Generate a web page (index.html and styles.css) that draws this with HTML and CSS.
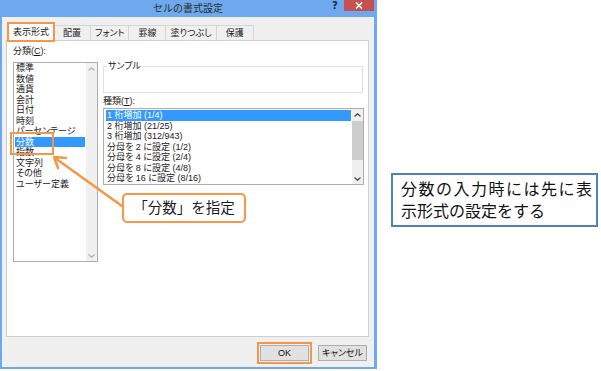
FILE: index.html
```html
<!DOCTYPE html>
<html lang="ja">
<head>
<meta charset="utf-8">
<link rel="stylesheet" href="styles.css">
</head>
<body>
<div class="stage">
  <div class="dialog">
    <div class="titlebar">
      <span class="title">セルの書式設定</span>
      <span class="help">?</span>
      <span class="close"><svg width="8" height="7" viewBox="0 0 8 7"><path d="M1 0.5 L7 6.5 M7 0.5 L1 6.5" stroke="#fff" stroke-width="1.6" fill="none"/></svg></span>
    </div>
    <div class="client">
      <div class="tabs">
        <div class="tab active">表示形式</div>
        <div class="tab">配置</div>
        <div class="tab">フォント</div>
        <div class="tab">罫線</div>
        <div class="tab">塗りつぶし</div>
        <div class="tab">保護</div>
      </div>
      <div class="panel">
        <div class="col">
          <div class="label">分類(<u>C</u>):</div>
          <div class="listbox cat">
            <ul class="items">
              <li class="item">標準</li>
              <li class="item">数値</li>
              <li class="item">通貨</li>
              <li class="item">会計</li>
              <li class="item">日付</li>
              <li class="item">時刻</li>
              <li class="item">パーセンテージ</li>
              <li class="item selected marked">分数</li>
              <li class="item">指数</li>
              <li class="item">文字列</li>
              <li class="item">その他</li>
              <li class="item">ユーザー定義</li>
            </ul>
            <div class="vscroll disabled">
              <span class="arrow-box"><svg width="7" height="4" viewBox="0 0 7 4"><path d="M0.5 3.5 L3.5 0.7 L6.5 3.5" stroke="#b4b4b4" stroke-width="1.2" fill="none"/></svg></span>
              <span class="arrow-box"><svg width="7" height="4" viewBox="0 0 7 4"><path d="M0.5 0.5 L3.5 3.3 L6.5 0.5" stroke="#b4b4b4" stroke-width="1.2" fill="none"/></svg></span>
            </div>
          </div>
        </div>
        <div class="col">
          <fieldset class="sample">
            <legend>サンプル</legend>
            <div class="sample-body"></div>
          </fieldset>
          <div class="label tight">種類(<u>T</u>):</div>
          <div class="listbox types">
            <ul class="items">
              <li class="item selected">1 桁増加 (1/4)</li>
              <li class="item">2 桁増加 (21/25)</li>
              <li class="item">3 桁増加 (312/943)</li>
              <li class="item">分母を 2 に設定 (1/2)</li>
              <li class="item">分母を 4 に設定 (2/4)</li>
              <li class="item">分母を 8 に設定 (4/8)</li>
              <li class="item">分母を 16 に設定 (8/16)</li>
            </ul>
            <div class="vscroll">
              <span class="arrow-box"><svg width="7" height="4" viewBox="0 0 7 4"><path d="M0.5 3.5 L3.5 0.7 L6.5 3.5" stroke="#505050" stroke-width="1.3" fill="none"/></svg></span>
              <span class="thumb"></span>
              <span class="track"></span>
              <span class="arrow-box"><svg width="7" height="4" viewBox="0 0 7 4"><path d="M0.5 0.5 L3.5 3.3 L6.5 0.5" stroke="#505050" stroke-width="1.3" fill="none"/></svg></span>
            </div>
          </div>
        </div>
      </div>
      <div class="buttons">
        <button class="btn ok">OK</button>
        <button class="btn">キャンセル</button>
      </div>
    </div>
  </div>
  <div class="note">分数の入力時には先に表示形式の設定をする</div>
  <div class="callout">「分数」を指定</div>
  <svg class="pointer" width="601" height="371" viewBox="0 0 601 371">
    <path d="M122 206 L55 158" stroke="#f79646" stroke-width="2.5" fill="none" stroke-linecap="round"/>
    <path d="M66 158 L54 157 L58 168" stroke="#f79646" stroke-width="2.5" fill="none" stroke-linecap="round" stroke-linejoin="round"/>
  </svg>
</div>
</body>
</html>
```

FILE: styles.css
```css
* { box-sizing: border-box; }
html, body { margin: 0; padding: 0; background: #fff; }
body {
  width: 601px;
  height: 371px;
  overflow: hidden;
  font-family: "Liberation Sans", "Noto Sans CJK JP", sans-serif;
  color: #1a1a1a;
}
.stage {
  position: relative;
  display: flex;
  align-items: flex-start;
  width: 601px;
  height: 371px;
}

/* dialog frame */
.dialog {
  display: flex;
  flex-direction: column;
  width: 377px;
  height: 369px;
  background: #6ea9ef;
  padding: 0 3px 2px 2px;
  flex-shrink: 0;
}
.titlebar {
  display: flex;
  align-items: flex-start;
  height: 17px;
}
.title {
  flex: 1;
  padding-left: 48px;
  text-align: center;
  font-size: 10px;
  line-height: 18px;
  color: #2a2a2a;
}
.help {
  width: 18px;
  font-size: 10px;
  font-weight: bold;
  line-height: 11px;
  color: #1c2b3a;
  text-align: center;
  font-family: "DejaVu Sans", sans-serif;
}
.close {
  width: 30px;
  height: 11px;
  background: #c75050;
  display: flex;
  align-items: center;
  justify-content: center;
}
.close svg { display: block; }

.client {
  flex: 1;
  background: #f0f0f0;
  padding: 6px 5px 0 4px;
  display: flex;
  flex-direction: column;
  font-feature-settings: "palt";
}

/* tabs */
.tabs {
  display: flex;
  align-items: flex-end;
  height: 17px;
  padding-left: 2px;
}
.tab {
  height: 15px;
  min-width: 38px;
  padding: 0 4px;
  margin-right: -1px;
  font-size: 9px;
  line-height: 14px;
  text-align: center;
  white-space: nowrap;
  background: #f0f0f0;
  border: 1px solid #d5d5d5;
  border-bottom: none;
}
.tab.active {
  height: 18px;
  margin-bottom: -1px;
  line-height: 16px;
  background: #fff;
  position: relative;
  z-index: 1;
  outline: 2px solid #f79646;
  outline-offset: -1px;
}

/* panel */
.panel {
  height: 297px;
  background: #fff;
  border: 1px solid #cfcfcf;
  display: grid;
  grid-template-columns: 85px 1fr;
  column-gap: 5px;
  align-items: start;
  padding: 4px 4px 0 6px;
}
.col { display: flex; flex-direction: column; min-width: 0; }
.label {
  height: 12px;
  line-height: 12px;
  font-size: 9px;
  margin-bottom: 5px;
}
.label.tight { margin: 2px 0 1px; }
.label u { text-decoration-thickness: 1px; }

.sample {
  margin: 16px 1px 0 0;
  padding: 0;
  border: 1px solid #e1e1e1;
  min-width: 0;
}
.sample legend {
  font-size: 9px;
  line-height: 10px;
  padding: 0 1px;
  margin-left: 3px;
}
.sample-body { height: 21px; }

/* list boxes */
.listbox {
  display: flex;
  border: 1px solid #acacb6;
  background: #fff;
}
.listbox.cat { height: 200px; }
.listbox.types { height: 77px; }
.items {
  flex: 1;
  list-style: none;
  margin: 0;
  padding: 0 1px 0 1px;
  min-width: 0;
}
.types .items { padding: 1px 1px 1px 2px; }
.item {
  height: 10.5px;
  line-height: 10.5px;
  font-size: 9px;
  padding-left: 1px;
  white-space: nowrap;
}
.item.selected { background: #3399ff; color: #fff; }
.item.marked { position: relative; }
.item.marked::after {
  content: "";
  position: absolute;
  left: -5px;
  top: -5px;
  width: 40px;
  height: 19px;
  border: 2px solid #f79646;
}

.vscroll {
  width: 11px;
  background: #f0f0f0;
  display: flex;
  flex-direction: column;
  justify-content: space-between;
}
.arrow-box {
  height: 11px;
  display: flex;
  align-items: center;
  justify-content: center;
}
.arrow-box svg { display: block; }
.thumb {
  height: 39px;
  margin: 1px 0 0;
  background: #cdcdcd;
}
.track { flex: 1; }

/* buttons */
.buttons {
  display: flex;
  justify-content: flex-end;
  gap: 9px;
  padding: 8px 2px 0 0;
}
.btn {
  width: 49px;
  height: 16px;
  padding: 0;
  border: 1px solid #adadad;
  background: #e1e1e1;
  font-family: "Liberation Sans", "Noto Sans CJK JP", sans-serif;
  font-feature-settings: "palt";
  font-size: 9px;
  line-height: 13px;
  color: #111;
}
.btn.ok {
  outline: 2px solid #f79646;
  outline-offset: 1px;
}

/* annotations */
.note {
  margin: 173px 0 0 14px;
  width: 207px;
  height: 54px;
  border: 2px solid #4f81bd;
  padding: 4px 4px 0 8px;
  font-size: 16px;
  line-height: 22px;
  text-align: justify;
  color: #111;
}
.callout {
  position: absolute;
  left: 122px;
  top: 193px;
  width: 124px;
  height: 30px;
  border: 2px solid #f79646;
  border-radius: 5px;
  background: #fff;
  font-size: 14.5px;
  line-height: 26px;
  text-align: center;
  color: #1a1a1a;
}
.pointer {
  position: absolute;
  left: 0;
  top: 0;
  pointer-events: none;
}
```
